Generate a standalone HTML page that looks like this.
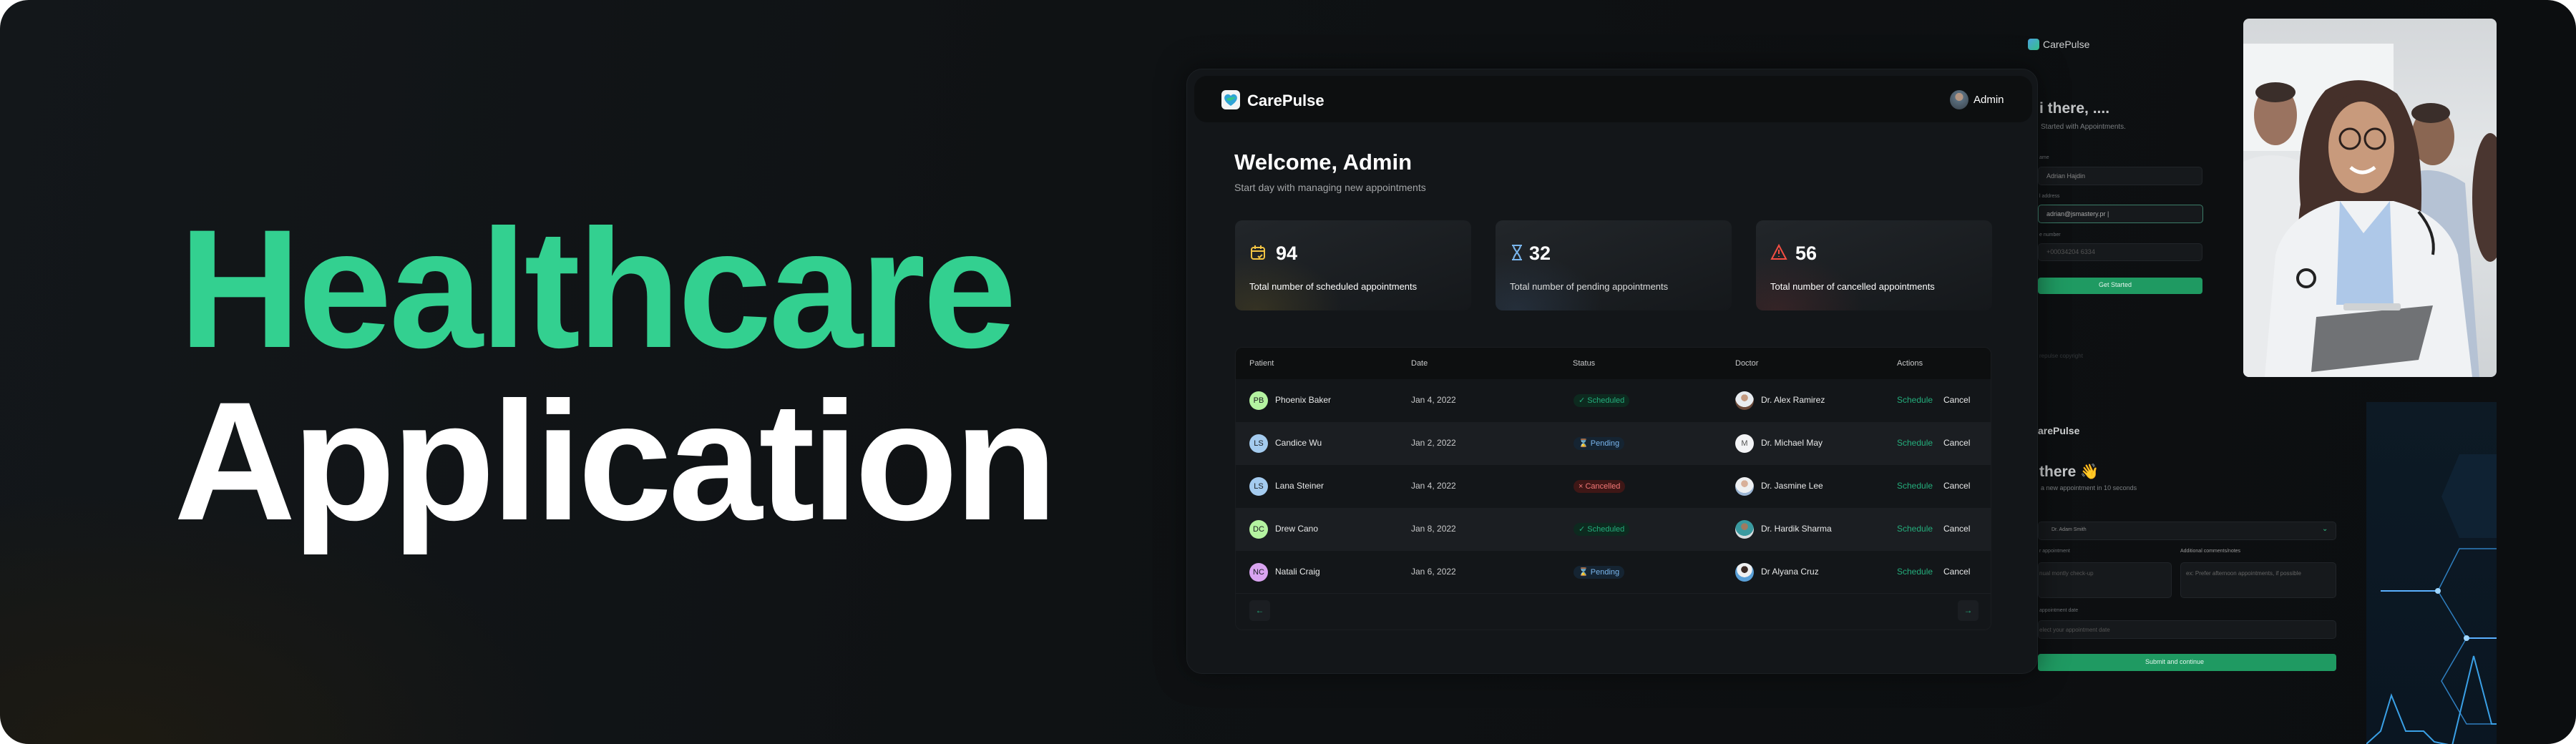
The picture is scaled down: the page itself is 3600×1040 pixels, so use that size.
<!DOCTYPE html>
<html><head><meta charset="utf-8">
<style>
*{margin:0;padding:0;box-sizing:border-box}
html,body{width:3600px;height:1040px;background:#fff;overflow:hidden;font-family:"Liberation Sans",sans-serif}
#card{position:absolute;left:0;top:0;width:3600px;height:1040px;border-radius:40px;overflow:hidden;
background:radial-gradient(ellipse 900px 500px at 150px 1040px,#1d1a12 0%,rgba(29,26,18,0) 70%),linear-gradient(100deg,#13171a 0%,#0f1214 40%,#0c0e10 100%)}
.abs{position:absolute}
.h1{position:absolute;left:250px;font-weight:bold;font-size:236px;letter-spacing:-4px;line-height:1}
.panel{left:1658px;top:96px;width:1190px;height:846px;background:#131619;border-radius:22px;border:1px solid #1c2024;box-shadow:0 0 40px rgba(0,0,0,.5)}
.hdr{left:10px;top:9px;width:1171px;height:65px;background:#0d0f10;border-radius:18px}
.t{position:absolute;white-space:nowrap;color:#fff}
.stat{position:absolute;top:211px;width:330px;height:126px;border-radius:10px;background:linear-gradient(160deg,#22262a,#15181b)}
.row{position:absolute;left:0;width:1057px;height:60px}
.av{position:absolute;left:19px;top:17px;width:26px;height:26px;border-radius:50%;font-size:11px;color:#1a1d21;text-align:center;line-height:26px}
.cell{position:absolute;top:22px;font-size:12px;color:#e8e9e9;white-space:nowrap}
.badge{position:absolute;left:472px;top:21px;height:18px;border-radius:9px;font-size:11px;line-height:18px;padding:0 7px}
.doc{position:absolute;left:698px;top:17px;width:26px;height:26px;border-radius:50%}
.inp{position:absolute;background:#16191c;border:1px solid #212529;border-radius:5px}
.dim{color:#6b6f73;font-size:10px}
</style></head><body>
<div id="card">
<div class="h1" style="top:286px;color:#33d090">Healthcare</div>
<div class="h1" style="top:527px;color:#fff;left:243px;letter-spacing:-5px">Application</div>

<!-- right side forms -->
<div class="abs" style="left:2834px;top:54px;width:16px;height:16px;border-radius:4px;background:linear-gradient(135deg,#4aa3e0,#37c48a)"></div>
<div class="t" style="left:2855px;top:54px;font-size:14px;color:#cfd1d2">CarePulse</div>
<div class="t" style="left:2850px;top:140px;font-size:21px;font-weight:bold;color:#c4c6c8">i there, ....</div>
<div class="t dim" style="left:2852px;top:172px;font-size:10px;color:#7a7e81">Started with Appointments.</div>
<div class="t dim" style="left:2850px;top:217px;font-size:7px">ame</div>
<div class="inp" style="left:2848px;top:233px;width:230px;height:26px"></div>
<div class="t" style="left:2860px;top:241px;font-size:9px;color:#888">Adrian Hajdin</div>
<div class="t dim" style="left:2850px;top:271px;font-size:7px">l address</div>
<div class="inp" style="left:2848px;top:286px;width:231px;height:26px;border-color:#3b7d68"></div>
<div class="t" style="left:2860px;top:294px;font-size:9px;color:#aaa">adrian@jsmastery.pr |</div>
<div class="t dim" style="left:2850px;top:325px;font-size:7px">e number</div>
<div class="inp" style="left:2848px;top:340px;width:230px;height:25px"></div>
<div class="t" style="left:2860px;top:347px;font-size:9px;color:#555">+00034204 6334</div>
<div class="abs" style="left:2848px;top:388px;width:230px;height:23px;background:#1f9a62;border-radius:4px"></div>
<div class="t" style="left:2933px;top:393px;font-size:9px;color:#e6f5ee">Get Started</div>
<div class="t" style="left:2850px;top:493px;font-size:8px;color:#34383b">repulse copyright</div>

<div class="t" style="left:2848px;top:594px;font-size:14px;font-weight:bold;color:#cfd1d2">arePulse</div>
<div class="t" style="left:2850px;top:648px;font-size:21px;font-weight:bold;color:#c4c6c8">there 👋</div>
<div class="t" style="left:2852px;top:677px;font-size:9px;color:#7a7e81">a new appointment in 10 seconds</div>
<div class="inp" style="left:2848px;top:729px;width:417px;height:26px"></div>
<div class="t" style="left:2867px;top:737px;font-size:7px;color:#888">Dr. Adam Smith</div>
<div class="t" style="left:3245px;top:734px;font-size:10px;color:#32c48a">⌄</div>
<div class="t dim" style="left:2850px;top:767px;font-size:7px">r appointment</div>
<div class="t dim" style="left:3047px;top:767px;font-size:7px;color:#999">Additional comments/notes</div>
<div class="inp" style="left:2848px;top:786px;width:187px;height:50px"></div>
<div class="inp" style="left:3047px;top:786px;width:218px;height:50px"></div>
<div class="t" style="left:2850px;top:797px;font-size:8px;color:#555">nual montly check-up</div>
<div class="t" style="left:3055px;top:797px;font-size:8px;color:#666">ex: Prefer afternoon appointments, if possible</div>
<div class="t dim" style="left:2850px;top:850px;font-size:7px">appointment date</div>
<div class="inp" style="left:2848px;top:867px;width:417px;height:26px"></div>
<div class="t" style="left:2850px;top:876px;font-size:8px;color:#555">elect your appointment date</div>
<div class="abs" style="left:2848px;top:914px;width:417px;height:24px;background:#1f9a62;border-radius:4px"></div>
<div class="t" style="left:2998px;top:920px;font-size:9px;color:#e6f5ee">Submit and continue</div>

<!-- photo -->
<svg class="abs" style="left:3135px;top:26px;border-radius:8px" width="354" height="501" viewBox="0 0 354 501">
<defs><linearGradient id="bg" x1="0" y1="0" x2="0" y2="1"><stop offset="0" stop-color="#d4d7da"/><stop offset=".4" stop-color="#e4e7e9"/><stop offset="1" stop-color="#cfd3d6"/></linearGradient></defs>
<rect width="354" height="501" fill="url(#bg)"/>
<rect x="0" y="35" width="210" height="150" fill="#f2f4f5"/>
<ellipse cx="45" cy="135" rx="30" ry="42" fill="#9a7360"/><ellipse cx="45" cy="103" rx="28" ry="14" fill="#3a2e2a"/>
<path d="M0 200 Q45 180 90 205 L100 501 L0 501Z" fill="#e9ebed"/>
<ellipse cx="265" cy="165" rx="30" ry="40" fill="#8a6652"/><ellipse cx="262" cy="132" rx="27" ry="14" fill="#3a2e2a"/>
<path d="M225 220 Q265 200 310 230 L330 501 L230 501Z" fill="#b5c2d4"/>
<ellipse cx="345" cy="250" rx="25" ry="90" fill="#4a3630"/>
<path d="M80 260 Q70 150 115 100 Q165 70 215 105 Q255 160 248 280 Q250 330 220 340 L100 340 Q70 315 80 260Z" fill="#45302a"/>
<ellipse cx="165" cy="180" rx="46" ry="64" fill="#c89a7c"/>
<path d="M120 132 Q165 98 210 132 Q200 108 165 103 Q130 108 120 132Z" fill="#45302a"/>
<circle cx="149" cy="168" r="14" fill="none" stroke="#2a1f1c" stroke-width="3"/><circle cx="184" cy="168" r="14" fill="none" stroke="#2a1f1c" stroke-width="3"/>
<path d="M150 208 Q166 222 184 208" stroke="#fff" stroke-width="5" fill="none"/>
<path d="M30 501 L45 330 Q60 275 130 255 L210 255 Q285 275 300 330 L320 501Z" fill="#f0f2f4"/>
<path d="M135 255 L168 300 L205 255 L210 400 L130 400Z" fill="#aec8e8"/>
<path d="M245 270 Q270 300 265 330" stroke="#222" stroke-width="4" fill="none"/>
<circle cx="88" cy="363" r="12" fill="none" stroke="#222" stroke-width="4"/>
<path d="M102 417 L265 401 L245 477 L95 494Z" fill="#707275"/>
<rect x="140" y="398" width="80" height="10" rx="3" fill="#cfd2d4"/>
</svg>

<!-- hex image -->
<svg class="abs" style="left:3307px;top:562px" width="182" height="478" viewBox="0 0 182 478">
<defs><linearGradient id="hx" x1="0" y1="0" x2="0" y2="1"><stop offset="0" stop-color="#0d1a25"/><stop offset="1" stop-color="#0a1622"/></linearGradient></defs>
<rect width="182" height="478" fill="url(#hx)"/>
<path d="M130 73 L182 73 L182 190 L130 190 L105 132Z" fill="#0f2233"/>
<path d="M100 264 L130 205 L182 205 M100 264 L140 330 L182 330 M140 330 L105 390 L140 450 L182 450" stroke="#2f7fc0" stroke-width="1.5" fill="none"/>
<path d="M20 264 L100 264" stroke="#5ab0ff" stroke-width="2"/><circle cx="100" cy="264" r="4" fill="#9fd6ff"/>
<path d="M140 330 L182 330" stroke="#5ab0ff" stroke-width="2"/><circle cx="140" cy="330" r="4" fill="#9fd6ff"/>
<path d="M0 478 L20 460 L35 410 L55 460 L80 460 L95 475 L120 480 L150 355 L175 450 L182 450" stroke="#3aa0e6" stroke-width="2" fill="none"/>
</svg>

<!-- dashboard panel -->
<div class="abs panel">
 <div class="abs hdr">
  <svg class="abs" style="left:38px;top:20px" width="26" height="27" viewBox="0 0 26 27"><rect width="26" height="27" rx="6" fill="#f2f4f5"/><path d="M13 22 C4 16 3 11 5 8 C7 5 11 5 13 8 C15 5 19 5 21 8 C23 11 22 16 13 22Z" fill="#2fa3d6"/><path d="M7 12 Q13 9 20 10 Q15 15 9 15Z" fill="#36c48a"/></svg>
  <div class="t" style="left:74px;top:22px;font-size:22px;font-weight:bold">CarePulse</div>
  <div class="abs" style="left:1056px;top:20px;width:26px;height:27px;border-radius:50%;background:radial-gradient(circle at 50% 35%,#b39683 0 25%,#5b6f7f 26%,#38414a)"></div>
  <div class="t" style="left:1089px;top:25px;font-size:15px">Admin</div>
 </div>
 <div class="t" style="left:66px;top:112px;font-size:31px;font-weight:bold">Welcome, Admin</div>
 <div class="t" style="left:66px;top:157px;font-size:14px;color:#a3a5a7">Start day with managing new appointments</div>

 <div class="stat" style="left:67px;background:radial-gradient(ellipse 120px 80px at 30px 126px,rgba(170,140,40,.18),transparent),linear-gradient(160deg,#22262a,#15181b)">
  <svg class="abs" style="left:21px;top:34px" width="22" height="22" viewBox="0 0 22 22" fill="none" stroke="#f4c543" stroke-width="2"><rect x="2" y="4" width="18" height="16" rx="3"/><path d="M2 9H20M7 1V6M15 1V6M11 16l2 2 4-4"/></svg>
  <div class="t" style="left:57px;top:31px;font-size:27px;font-weight:bold">94</div>
  <div class="t" style="left:20px;top:85px;font-size:13px">Total number of  scheduled appointments</div>
 </div>
 <div class="stat" style="left:431px;background:radial-gradient(ellipse 120px 80px at 30px 126px,rgba(80,120,170,.18),transparent),linear-gradient(160deg,#22262a,#15181b)">
  <svg class="abs" style="left:21px;top:34px" width="18" height="22" viewBox="0 0 18 22" fill="none" stroke="#79b5ec" stroke-width="2"><path d="M2 1H16M2 21H16M4 1C4 7 14 14 14 21M14 1C14 7 4 14 4 21"/></svg>
  <div class="t" style="left:47px;top:31px;font-size:27px;font-weight:bold">32</div>
  <div class="t" style="left:20px;top:85px;font-size:13px;color:#dcdddd">Total number of pending appointments</div>
 </div>
 <div class="stat" style="left:795px;background:radial-gradient(ellipse 120px 80px at 30px 126px,rgba(170,60,60,.18),transparent),linear-gradient(160deg,#22262a,#15181b)">
  <svg class="abs" style="left:20px;top:33px" width="24" height="23" viewBox="0 0 24 23" fill="none" stroke="#f24e43" stroke-width="2"><path d="M12 2L22 21H2Z M12 8V14 M12 17V18"/></svg>
  <div class="t" style="left:55px;top:31px;font-size:27px;font-weight:bold">56</div>
  <div class="t" style="left:20px;top:85px;font-size:13px">Total number of cancelled  appointments</div>
 </div>

 <div class="abs" style="left:67px;top:388px;width:1057px;height:396px;border-radius:10px;overflow:hidden;background:#131619;border:1px solid #1a1d20">
  <div class="row" style="top:0;height:44px;background:#0d0f10">
   <div class="cell" style="left:19px;top:16px;font-size:11px;color:#c8c9ca">Patient</div>
   <div class="cell" style="left:245px;top:16px;font-size:11px;color:#c8c9ca">Date</div>
   <div class="cell" style="left:471px;top:16px;font-size:11px;color:#c8c9ca">Status</div>
   <div class="cell" style="left:698px;top:16px;font-size:11px;color:#c8c9ca">Doctor</div>
   <div class="cell" style="left:924px;top:16px;font-size:11px;color:#c8c9ca">Actions</div>
  </div>
  <div class="row" style="top:44px;background:#131619">
   <div class="av" style="background:#b4f3a0">PB</div><div class="cell" style="left:55px">Phoenix Baker</div>
   <div class="cell" style="left:245px;color:#c8c9ca">Jan 4, 2022</div>
   <div class="badge" style="background:#0d2a1f;color:#24ae7c">✓ Scheduled</div>
   <div class="doc" style="background:radial-gradient(circle at 50% 35%,#c49a80 0 22%,#e8ecf0 23% 60%,#6b4a3a 61%)"></div>
   <div class="cell" style="left:734px">Dr. Alex Ramirez</div>
   <div class="cell" style="left:924px;color:#24ae7c">Schedule</div><div class="cell" style="left:989px">Cancel</div>
  </div>
  <div class="row" style="top:104px;background:#1b1e22">
   <div class="av" style="background:#a4cbef">LS</div><div class="cell" style="left:55px">Candice Wu</div>
   <div class="cell" style="left:245px;color:#c8c9ca">Jan 2, 2022</div>
   <div class="badge" style="background:#152432;color:#79b5ec">⌛ Pending</div>
   <div class="doc" style="background:#f3f4f6;color:#555;font-size:11px;text-align:center;line-height:26px">M</div>
   <div class="cell" style="left:734px">Dr. Michael May</div>
   <div class="cell" style="left:924px;color:#24ae7c">Schedule</div><div class="cell" style="left:989px">Cancel</div>
  </div>
  <div class="row" style="top:164px;background:#131619">
   <div class="av" style="background:#a4cbef">LS</div><div class="cell" style="left:55px">Lana Steiner</div>
   <div class="cell" style="left:245px;color:#c8c9ca">Jan 4, 2022</div>
   <div class="badge" style="background:#3e1716;color:#f37877">× Cancelled</div>
   <div class="doc" style="background:radial-gradient(circle at 50% 35%,#d8b09a 0 22%,#eef0f2 23% 60%,#9cb6d4 61%)"></div>
   <div class="cell" style="left:734px">Dr. Jasmine Lee</div>
   <div class="cell" style="left:924px;color:#24ae7c">Schedule</div><div class="cell" style="left:989px">Cancel</div>
  </div>
  <div class="row" style="top:224px;background:#1b1e22">
   <div class="av" style="background:#b4f3a0">DC</div><div class="cell" style="left:55px">Drew Cano</div>
   <div class="cell" style="left:245px;color:#c8c9ca">Jan 8, 2022</div>
   <div class="badge" style="background:#0d2a1f;color:#24ae7c">✓ Scheduled</div>
   <div class="doc" style="background:radial-gradient(circle at 50% 35%,#a07a60 0 22%,#3a9aa0 23% 60%,#d8dde0 61%)"></div>
   <div class="cell" style="left:734px">Dr. Hardik Sharma</div>
   <div class="cell" style="left:924px;color:#24ae7c">Schedule</div><div class="cell" style="left:989px">Cancel</div>
  </div>
  <div class="row" style="top:284px;background:#131619">
   <div class="av" style="background:#d9a4f0">NC</div><div class="cell" style="left:55px">Natali Craig</div>
   <div class="cell" style="left:245px;color:#c8c9ca">Jan 6, 2022</div>
   <div class="badge" style="background:#152432;color:#79b5ec">⌛ Pending</div>
   <div class="doc" style="background:radial-gradient(circle at 50% 35%,#3a2a25 0 22%,#eef0f2 23% 50%,#5aa0d8 51%)"></div>
   <div class="cell" style="left:734px">Dr Alyana Cruz</div>
   <div class="cell" style="left:924px;color:#24ae7c">Schedule</div><div class="cell" style="left:989px">Cancel</div>
  </div>
  <div class="abs" style="left:0;top:343px;width:1057px;height:1px;background:#1c1f23"></div>
  <div class="abs" style="left:19px;top:353px;width:29px;height:29px;border-radius:5px;background:#1b1e22;color:#24ae7c;font-size:12px;text-align:center;line-height:29px">←</div>
  <div class="abs" style="left:1009px;top:353px;width:29px;height:29px;border-radius:5px;background:#1b1e22;color:#24ae7c;font-size:12px;text-align:center;line-height:29px">→</div>
 </div>
</div>
</div>
</body></html>
